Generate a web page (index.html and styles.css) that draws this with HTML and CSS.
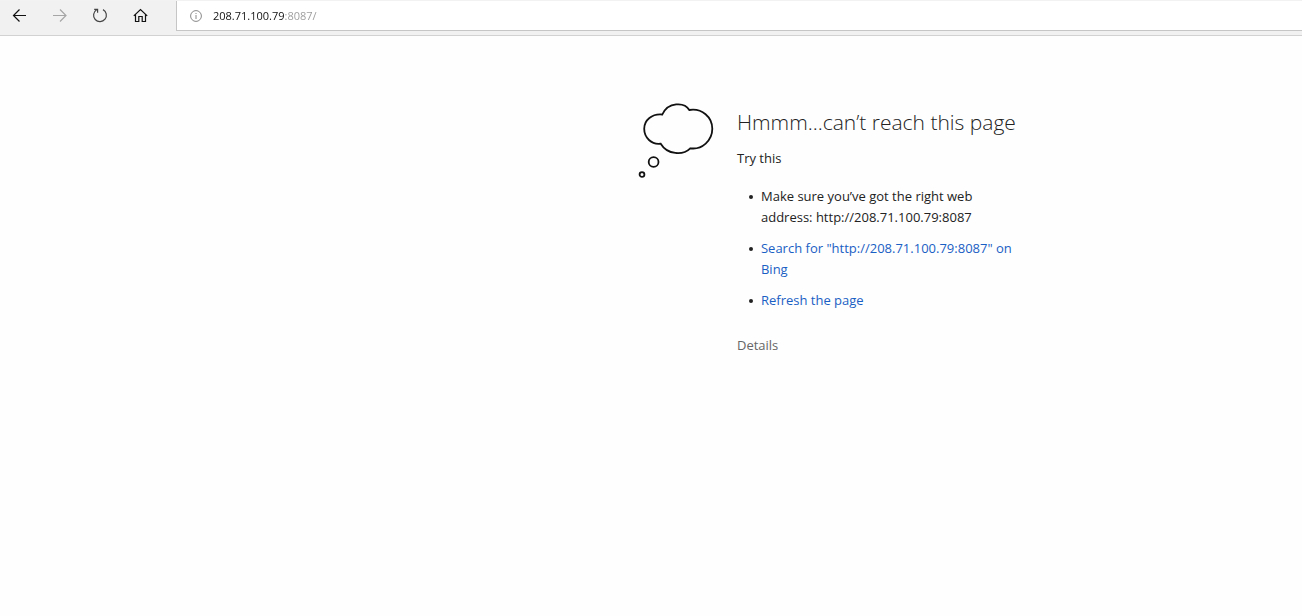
FILE: index.html
```html
<!DOCTYPE html>
<html lang="en">
<head>
<meta charset="utf-8">
<title>Can’t reach this page</title>
<link rel="stylesheet" href="styles.css">
</head>
<body>
<header class="toolbar">
  <nav class="nav" aria-label="Browser navigation">
    <button class="nav-button" type="button" aria-label="Back">
      <svg class="icon" viewBox="0 0 16 16"><path d="M14 7.500H1.500M7.500 1.500L1.500 7.500L7.500 13.500"/></svg>
    </button>
    <button class="nav-button nav-button-off" type="button" aria-label="Forward" disabled>
      <svg class="icon" viewBox="0 0 16 16"><path d="M1 7.500H14M8 1.500L14 7.500L8 13.500"/></svg>
    </button>
    <button class="nav-button" type="button" aria-label="Refresh">
      <svg class="icon icon-soft" viewBox="0 0 16 16"><path d="M11 1.600A6.400 6.400 0 1 1 4.600 1.800M2.200 1.400H5.600V4.800"/></svg>
    </button>
    <button class="nav-button" type="button" aria-label="Home">
      <svg class="icon" viewBox="0 0 16 16"><path d="M1.800 7.900L8.500 1.500L15.200 7.900M3.500 6.500V13.500H6.800V8.500H10.200V13.500H13.500V6.500"/></svg>
    </button>
  </nav>
  <div class="address">
    <svg class="info" viewBox="0 0 12 12" aria-hidden="true"><circle cx="6" cy="6" r="5.400"/><path d="M6 5V9M6 3V4"/></svg>
    <input class="address-input" type="text" aria-label="Address" value="208.71.100.79:8087/">
  </div>
</header>
<main class="error">
  <svg class="cloud" viewBox="0 0 76 76" aria-hidden="true">
    <path d="M24.300 11.500C30 -1.200 46.500 -1.200 51.300 7C64 5 74.300 14 74.300 25.800C74.300 37.500 64 47 52.300 45.300C45 52.500 29.500 52 22.700 40.700C13.500 42 6.200 34.500 6.200 25.800C6.200 17 14 10.500 24.300 11.500Z"/>
    <circle cx="15.600" cy="59" r="4.900"/>
    <circle cx="4" cy="71.500" r="2.400"/>
  </svg>
  <section class="message">
    <h1 class="title">Hmmm...can’t reach this page</h1>
    <p class="lead">Try this</p>
    <ul class="tips">
      <li class="tip"><span>Make sure you’ve got the right web address: http://208.71.100.79:8087</span></li>
      <li class="tip"><a class="link" href="#">Search for "http://208.71.100.79:8087" on Bing</a></li>
      <li class="tip"><a class="link" href="#">Refresh the page</a></li>
    </ul>
    <button class="details" type="button">Details</button>
  </section>
</main>
</body>
</html>
```
FILE: styles.css
```css
* {
  box-sizing: border-box;
}

body {
  margin: 0;
  background: #fefefe;
  color: #222;
  font: 13px/21px "Segoe UI", "Open Sans", "Noto Sans", sans-serif;
}

button {
  padding: 0;
  border: 0;
  background: none;
  font: inherit;
}

.toolbar {
  display: flex;
  height: 36px;
  padding-bottom: 4px;
  border-top: 1px solid #f2f2f2;
  border-bottom: 1px solid #d2d2d2;
  background: #f1f1f1;
}

.nav {
  display: flex;
  width: 176px;
}

.nav-button {
  display: flex;
  align-items: center;
  justify-content: center;
  width: 40px;
  color: #111;
}

.nav-button-off {
  color: #a6a6a6;
}

.icon {
  width: 16px;
  fill: none;
  stroke: currentColor;
  stroke-width: 1.2;
}

.icon-soft {
  stroke: #444;
}

.address {
  display: flex;
  flex: 1;
  align-items: center;
  gap: 11px;
  padding-left: 13px;
  border: 1px solid #c6c6c6;
  border-width: 0 0 1px 1px;
  background: #fff;
}

.info {
  width: 12px;
  fill: none;
  stroke: #888;
}

.address-input {
  flex: 1;
  min-width: 0;
  padding: 0;
  border: 0;
  outline: 0;
  background: linear-gradient(90deg, #111 72px, #999 72px);
  background-clip: text;
  color: transparent;
  font: 11px/20px "Segoe UI", "Open Sans", "Noto Sans", sans-serif;
}

.error {
  display: flex;
  gap: 23px;
  padding: 67px 20px 20px 49%;
}

.cloud {
  flex: none;
  width: 76px;
  height: 76px;
  fill: none;
  stroke: #111;
  stroke-width: 1.8;
}

.message {
  max-width: 288px;
}

.title {
  margin: 4px 0 11px;
  font-size: 21px;
  font-weight: 300;
  line-height: 30px;
  white-space: nowrap;
}

.lead {
  margin: 0 0 17px;
}

.tips {
  display: grid;
  gap: 10px;
  margin: 0 0 24px;
  padding: 0 0 0 12px;
  list-style: none;
}

.tip {
  display: flex;
  gap: 8px;
}

.tip::before {
  flex: none;
  width: 4px;
  height: 4px;
  margin-top: 9px;
  border-radius: 50%;
  background: #222;
  content: "";
}

.link {
  color: #1a60c4;
  text-decoration: none;
}

.details {
  color: #666;
}
```
